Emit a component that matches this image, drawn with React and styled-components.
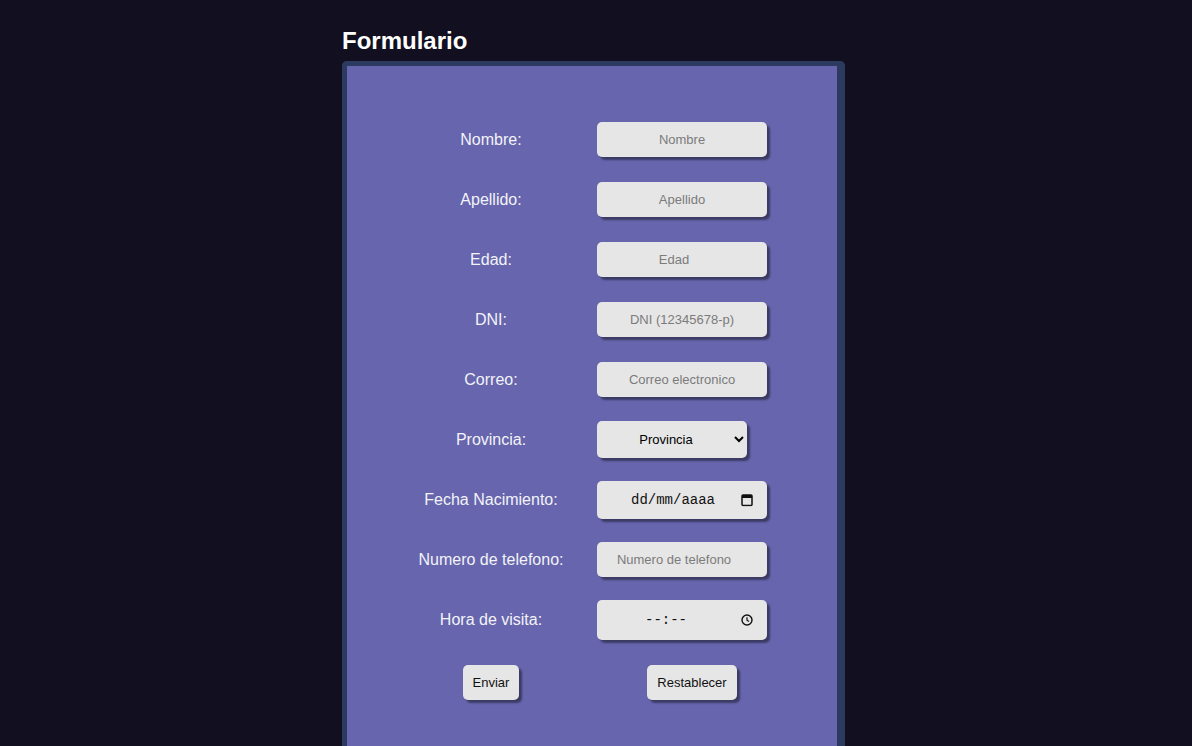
import React from 'react';
import styled, { createGlobalStyle } from 'styled-components';

const GlobalStyle = createGlobalStyle`
  html, body {
    margin: 0;
    padding: 0;
    background: #120f20;
    overflow: hidden;
  }
  body {
    font-family: "Liberation Sans", Arial, sans-serif;
  }
`;

const Page = styled.div`
  padding-left: 342px;
  padding-top: 27px;
  height: 746px;
  box-sizing: border-box;
`;

const Title = styled.h2`
  margin: 0 0 6px 0;
  font-size: 24px;
  font-weight: bold;
  color: #ffffff;
  line-height: 28px;
`;

const Card = styled.form`
  width: 452px;
  border: 5px solid #2c3a5f;
  border-right-width: 8px;
  border-bottom: none;
  border-radius: 5px 5px 0 0;
  background: #6665ad;
  padding: 43px 0 60px 38px;
  margin: 0;
`;

const Grid = styled.div`
  display: grid;
  grid-template-columns: 212px 190px;
  grid-auto-rows: 60px;
  align-items: center;
`;

const Label = styled.label`
  justify-self: center;
  color: #f3f3f8;
  font-size: 16px;
  padding-top: 2px;
`;

const Field = styled.input`
  justify-self: start;
  width: 170px;
  height: 35px;
  box-sizing: border-box;
  border: none;
  border-radius: 5px;
  background: #e6e6e6;
  box-shadow: 3px 3px 2px rgba(0, 0, 0, 0.42);
  text-align: center;
  font-family: "Liberation Sans", Arial, sans-serif;
  font-size: 13px;
  color: #111;
  outline: none;
  padding: 0 ${(p) => (p.$spin ? 22 : 8)}px 0 ${(p) => (p.$spin ? 6 : 8)}px;

  &::placeholder {
    color: #7b7b7b;
  }
`;

const Select = styled.select`
  justify-self: start;
  width: 150px;
  height: 37px;
  border: none;
  border-radius: 5px;
  background: #e6e6e6;
  box-shadow: 3px 3px 2px rgba(0, 0, 0, 0.42);
  font-family: "Liberation Sans", Arial, sans-serif;
  font-size: 13px;
  color: #000;
  text-align: center;
  text-align-last: center;
  padding: 0 4px;
`;

const Picker = styled.div`
  position: relative;
  justify-self: start;
  width: 170px;
  height: ${(p) => p.$h}px;
  margin-top: 2px;
  border-radius: 5px;
  background: #e6e6e6;
  box-shadow: 3px 3px 2px rgba(0, 0, 0, 0.42);
  display: flex;
  align-items: center;
  box-sizing: border-box;
  padding: 0 26px 0 8px;
`;

const PickerText = styled.span`
  flex: 1;
  text-align: center;
  font-family: "Liberation Mono", "DejaVu Sans Mono", monospace;
  font-size: 14px;
  color: #111;
  padding-right: ${(p) => p.$shift || 0}px;
`;

const PickerIcon = styled.svg`
  position: absolute;
  right: 14px;
  top: 50%;
  transform: translateY(-50%);
`;

const Button = styled.button`
  justify-self: center;
  height: 35px;
  padding: 0 10px;
  border: none;
  border-radius: 5px;
  background: #e6e6e6;
  box-shadow: 3px 3px 2px rgba(0, 0, 0, 0.42);
  font-family: "Liberation Sans", Arial, sans-serif;
  font-size: 13px;
  color: #111;
  margin-top: 7px;
`;

const fields = [
  { label: 'Nombre:', placeholder: 'Nombre' },
  { label: 'Apellido:', placeholder: 'Apellido' },
  { label: 'Edad:', placeholder: 'Edad', spin: true },
  { label: 'DNI:', placeholder: 'DNI (12345678-p)' },
  { label: 'Correo:', placeholder: 'Correo electronico' },
];

function App() {
  return (
    <>
      <GlobalStyle />
      <Page>
        <Title>Formulario</Title>
        <Card onSubmit={(e) => e.preventDefault()}>
          <Grid>
            {fields.map((f) => (
              <React.Fragment key={f.label}>
                <Label>{f.label}</Label>
                <Field type="text" placeholder={f.placeholder} $spin={f.spin} />
              </React.Fragment>
            ))}

            <Label>Provincia:</Label>
            <Select defaultValue="">
              <option value="">Provincia</option>
            </Select>

            <Label>Fecha Nacimiento:</Label>
            <Picker $h={38}>
              <PickerText>dd/mm/aaaa</PickerText>
              <PickerIcon width="12" height="13" viewBox="0 0 12 13">
                <rect x="1" y="1.5" width="10" height="10.5" rx="1" fill="none" stroke="#111" strokeWidth="1.5" />
                <rect x="1" y="1.5" width="10" height="3" fill="#111" />
              </PickerIcon>
            </Picker>

            <Label>Numero de telefono:</Label>
            <Field type="tel" placeholder="Numero de telefono" $spin />

            <Label>Hora de visita:</Label>
            <Picker $h={40}>
              <PickerText $shift={14}>--:--</PickerText>
              <PickerIcon width="12" height="12" viewBox="0 0 12 12">
                <circle cx="6" cy="6" r="5" fill="none" stroke="#111" strokeWidth="1.4" />
                <path d="M6 3.2V6.2L8 7.6" fill="none" stroke="#111" strokeWidth="1.2" />
              </PickerIcon>
            </Picker>

            <Button type="submit">Enviar</Button>
            <Button type="reset">Restablecer</Button>
          </Grid>
        </Card>
      </Page>
    </>
  );
}

export default App;
